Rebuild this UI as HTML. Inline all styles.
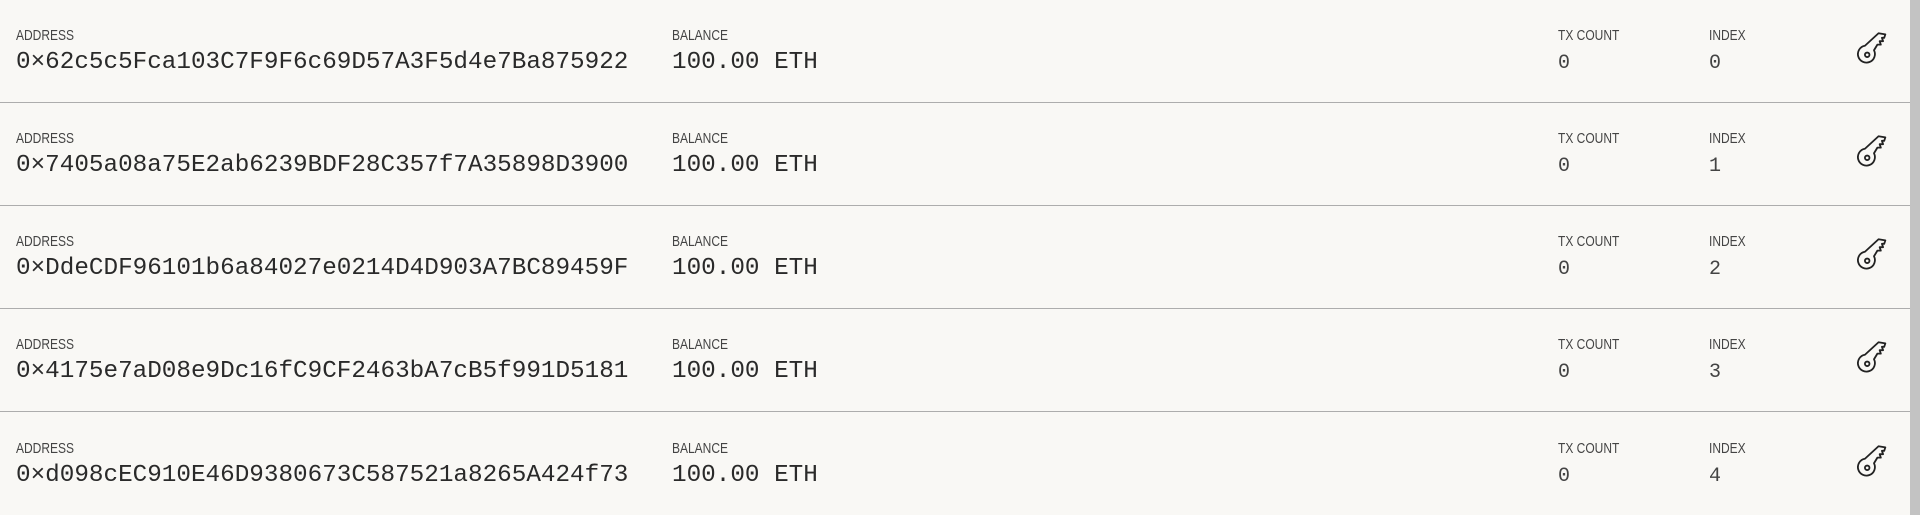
<!DOCTYPE html>
<html><head><style>
html,body{margin:0;padding:0;width:1920px;height:515px;overflow:hidden;background:#f9f8f5;}
.row{position:absolute;left:0;width:1910px;height:102px;border-bottom:1px solid #adadad;}
.lab{position:absolute;top:27px;font-family:"Liberation Sans",sans-serif;font-size:15px;color:#444;transform:scaleX(0.8);transform-origin:0 0;}
.val{position:absolute;top:49px;font-family:"Liberation Mono",monospace;font-size:24.3px;color:#2a2a2a;}
.sm{font-size:20px;top:52px;color:#444}
.key{position:absolute;left:1857px;top:31px;}
.sb{position:absolute;left:1910px;top:0;width:10px;height:515px;background:#e8e8e8}
.th{position:absolute;left:1910px;top:0;width:10px;height:515px;background:#c3c3c3}
</style></head><body>
<div class="row" style="top:0">
<div class="lab" style="left:16px">ADDRESS</div><div class="val" style="left:16px">0×62c5c5Fca103C7F9F6c69D57A3F5d4e7Ba875922</div>
<div class="lab" style="left:672px">BALANCE</div><div class="val" style="left:672px">100.00 ETH</div>
<div class="lab" style="left:1558px">TX COUNT</div><div class="val sm" style="left:1558px">0</div>
<div class="lab" style="left:1709px">INDEX</div><div class="val sm" style="left:1709px">0</div>
<svg class="key" width="34" height="34" viewBox="0 0 30 30" fill="none" stroke="#222" stroke-width="1.6" stroke-linejoin="round"><path d="M7 13 L19 2 L25 3 L24 6 L22 6 L23 9 L20 9 L21 12 L18 12 L15 17 A7.5 7.5 0 1 1 7 13 Z"/><circle cx="9" cy="21" r="2"/></svg>
</div>
<div class="row" style="top:103px">
<div class="lab" style="left:16px">ADDRESS</div><div class="val" style="left:16px">0×7405a08a75E2ab6239BDF28C357f7A35898D3900</div>
<div class="lab" style="left:672px">BALANCE</div><div class="val" style="left:672px">100.00 ETH</div>
<div class="lab" style="left:1558px">TX COUNT</div><div class="val sm" style="left:1558px">0</div>
<div class="lab" style="left:1709px">INDEX</div><div class="val sm" style="left:1709px">1</div>
<svg class="key" width="34" height="34" viewBox="0 0 30 30" fill="none" stroke="#222" stroke-width="1.6" stroke-linejoin="round"><path d="M7 13 L19 2 L25 3 L24 6 L22 6 L23 9 L20 9 L21 12 L18 12 L15 17 A7.5 7.5 0 1 1 7 13 Z"/><circle cx="9" cy="21" r="2"/></svg>
</div>
<div class="row" style="top:206px">
<div class="lab" style="left:16px">ADDRESS</div><div class="val" style="left:16px">0×DdeCDF96101b6a84027e0214D4D903A7BC89459F</div>
<div class="lab" style="left:672px">BALANCE</div><div class="val" style="left:672px">100.00 ETH</div>
<div class="lab" style="left:1558px">TX COUNT</div><div class="val sm" style="left:1558px">0</div>
<div class="lab" style="left:1709px">INDEX</div><div class="val sm" style="left:1709px">2</div>
<svg class="key" width="34" height="34" viewBox="0 0 30 30" fill="none" stroke="#222" stroke-width="1.6" stroke-linejoin="round"><path d="M7 13 L19 2 L25 3 L24 6 L22 6 L23 9 L20 9 L21 12 L18 12 L15 17 A7.5 7.5 0 1 1 7 13 Z"/><circle cx="9" cy="21" r="2"/></svg>
</div>
<div class="row" style="top:309px">
<div class="lab" style="left:16px">ADDRESS</div><div class="val" style="left:16px">0×4175e7aD08e9Dc16fC9CF2463bA7cB5f991D5181</div>
<div class="lab" style="left:672px">BALANCE</div><div class="val" style="left:672px">100.00 ETH</div>
<div class="lab" style="left:1558px">TX COUNT</div><div class="val sm" style="left:1558px">0</div>
<div class="lab" style="left:1709px">INDEX</div><div class="val sm" style="left:1709px">3</div>
<svg class="key" width="34" height="34" viewBox="0 0 30 30" fill="none" stroke="#222" stroke-width="1.6" stroke-linejoin="round"><path d="M7 13 L19 2 L25 3 L24 6 L22 6 L23 9 L20 9 L21 12 L18 12 L15 17 A7.5 7.5 0 1 1 7 13 Z"/><circle cx="9" cy="21" r="2"/></svg>
</div>
<div class="row" style="top:413px;border-bottom:none">
<div class="lab" style="left:16px">ADDRESS</div><div class="val" style="left:16px">0×d098cEC910E46D9380673C587521a8265A424f73</div>
<div class="lab" style="left:672px">BALANCE</div><div class="val" style="left:672px">100.00 ETH</div>
<div class="lab" style="left:1558px">TX COUNT</div><div class="val sm" style="left:1558px">0</div>
<div class="lab" style="left:1709px">INDEX</div><div class="val sm" style="left:1709px">4</div>
<svg class="key" width="34" height="34" viewBox="0 0 30 30" fill="none" stroke="#222" stroke-width="1.6" stroke-linejoin="round"><path d="M7 13 L19 2 L25 3 L24 6 L22 6 L23 9 L20 9 L21 12 L18 12 L15 17 A7.5 7.5 0 1 1 7 13 Z"/><circle cx="9" cy="21" r="2"/></svg>
</div>
<div class="sb"></div><div class="th"></div>
</body></html>
